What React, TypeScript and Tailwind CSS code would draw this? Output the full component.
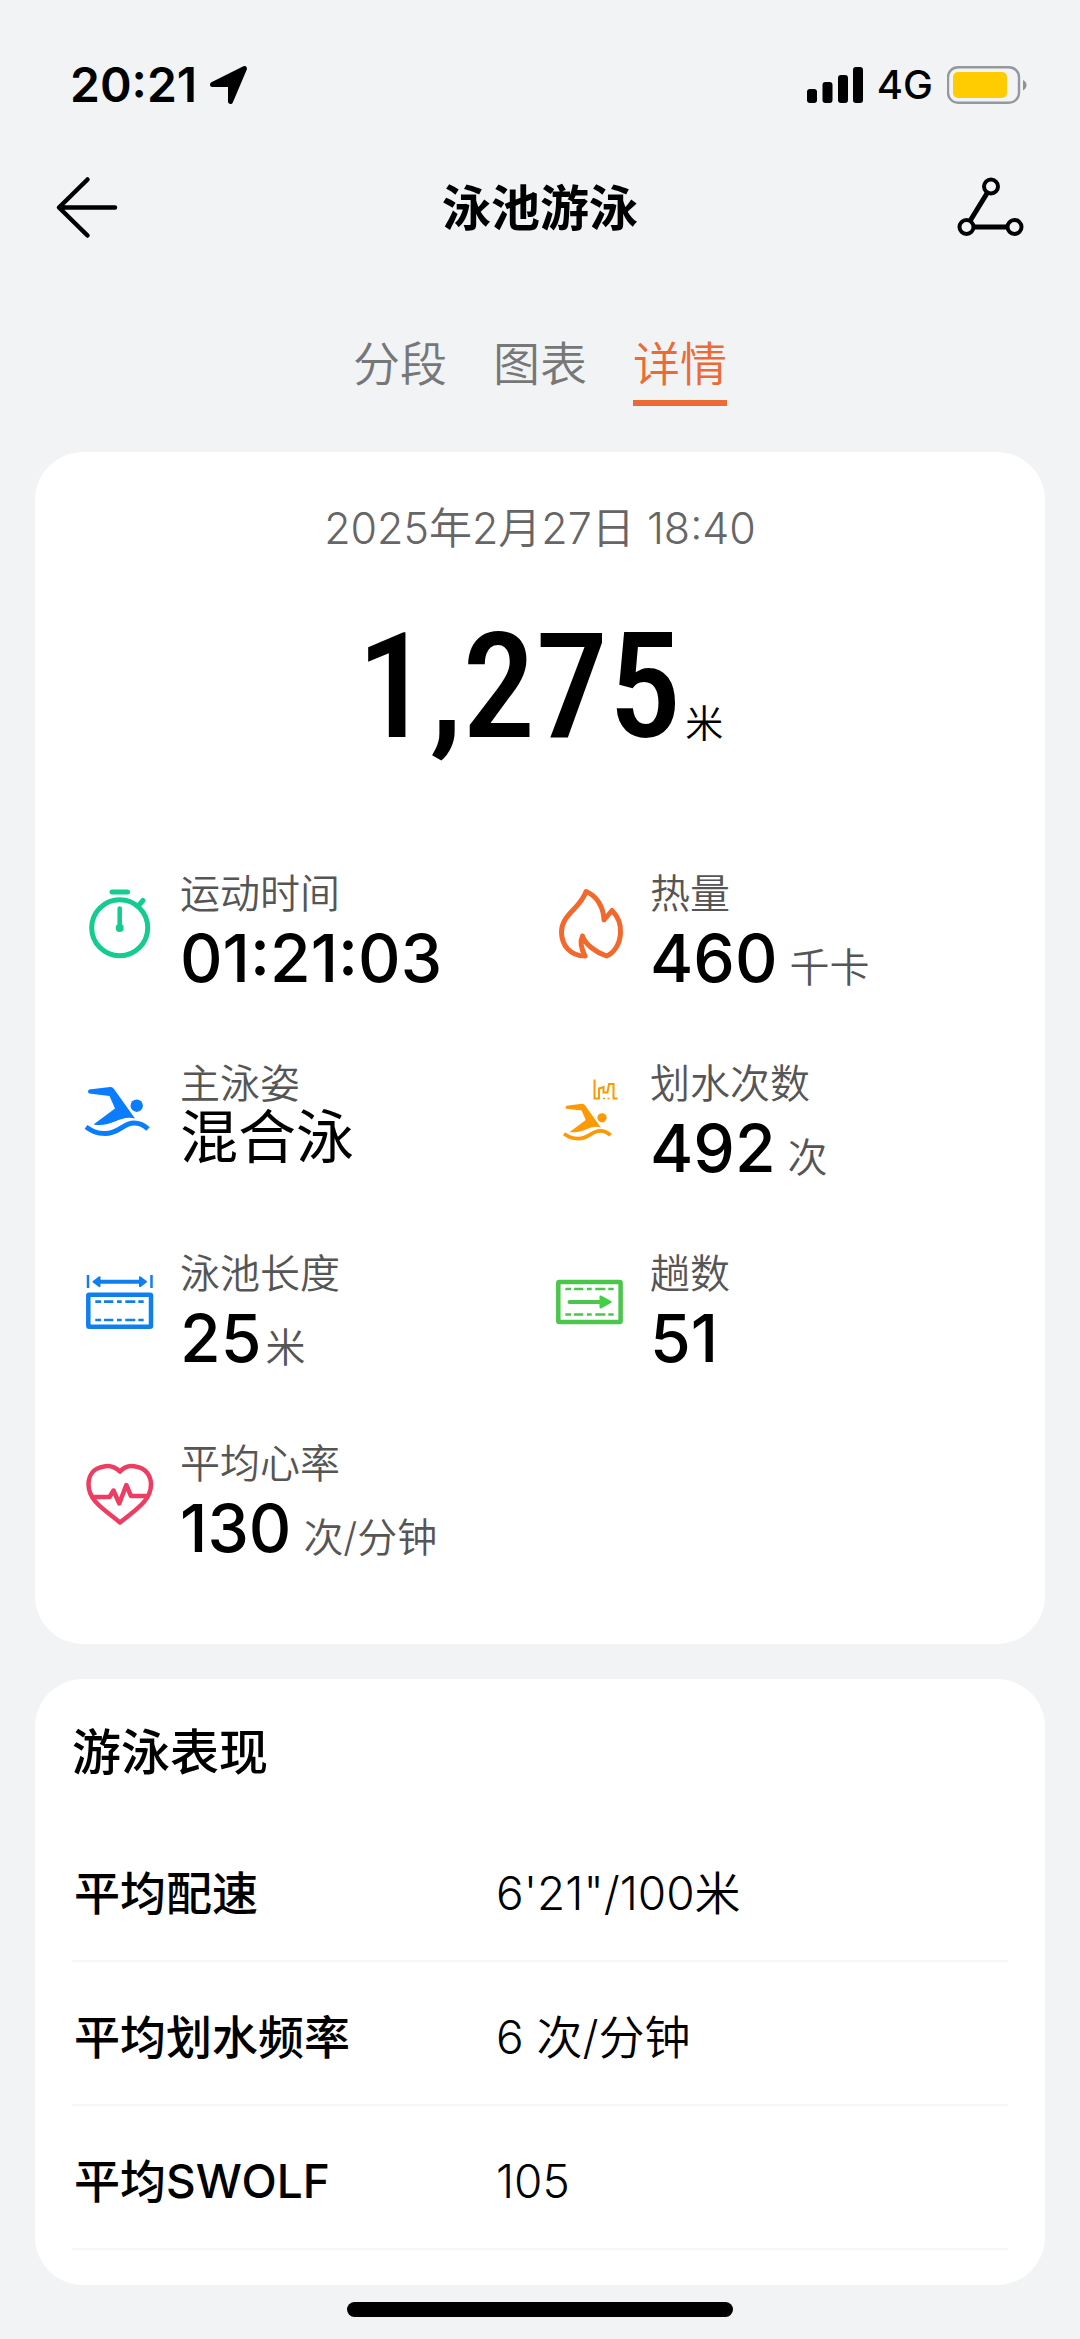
import type { ReactNode } from "react";

interface Metric {
  label: string;
  value: string;
  unit?: string;
  tightUnit?: boolean;
  icon: ReactNode;
}

const iconClass = "mt-[18px] h-[72px] w-[72px] shrink-0";

function StopwatchIcon() {
  return (
    <svg className={iconClass} viewBox="0 0 72 72" fill="none" stroke="#15cb8f" strokeWidth="5" strokeLinecap="round">
      <circle cx="35.7" cy="39.7" r="28" />
      <path d="M28 4h15.500M55 17l4-4.500" />
      <path d="M35.700 20.500v18" strokeWidth="4.500" />
      <circle cx="35.7" cy="40" r="4" fill="#15cb8f" stroke="none" />
    </svg>
  );
}

function FlameIcon() {
  return (
    <svg className={iconClass} viewBox="0 0 72 72" fill="none" stroke="#f2692e" strokeWidth="5" strokeLinejoin="round">
      <path d="M32 3.500C43 8 49.500 19 50 32l8-9.500c6 6 9 14 8.500 22.500C66 56 60 65 52.500 68 41 64 31 56 28.500 48c-3 6-1 13 2.500 20C16 68 7.500 57 7.500 44 7.500 26 27 20 32 3.500Z" />
    </svg>
  );
}

function Swimmer() {
  return (
    <>
      <path d="M5 11.500 26 9q2.500-.3 4 2L51 40.500C36 36.500 27 50 9.500 46.500L31 30.500 25.500 18 5 15.500q-2-2 0-4Z" />
      <circle cx="52.7" cy="27.7" r="6.200" />
      <path d="M2 49c6 4 10 6.500 19 6.500C35 55.500 39 45 50 45c6 0 10 2 14 6" fill="none" stroke="currentColor" strokeWidth="5" />
    </>
  );
}

function StrokeStyleIcon() {
  return (
    <svg className="mt-[18px] h-[72px] w-[72px] shrink-0 text-[#0a7dff]" viewBox="0 0 72 72" fill="currentColor">
      <Swimmer />
    </svg>
  );
}

function StrokeCountIcon() {
  return (
    <svg className="mt-[18px] h-[72px] w-[72px] shrink-0 text-[#fb9a05]" viewBox="0 0 72 72" fill="currentColor">
      <g transform="translate(8.500 19) scale(.75)">
        <Swimmer />
      </g>
      <path d="M40.500 1.500v19h4.500V10.500l4.500-1.500v5.500h4l1.500-8.500h4.500v14.500h4" fill="none" stroke="currentColor" strokeWidth="2" />
      <path d="M49 20.500h2M53.500 20.500h2" stroke="currentColor" strokeWidth="1.500" />
    </svg>
  );
}

function PoolLengthIcon() {
  return (
    <svg className={iconClass} viewBox="0 0 72 72" fill="none" stroke="#0f7ff0">
      <path d="M4 7v13M67.500 7v13" strokeWidth="2.500" />
      <path d="M14 13.700h44" strokeWidth="4" />
      <path d="m9.500 13.700 6-4.500v9zM62 13.700l-6-4.500v9z" fill="#0f7ff0" strokeWidth="2" strokeLinejoin="round" />
      <rect x="4.300" y="26.700" width="62.700" height="32" rx="1" strokeWidth="4.500" />
      <path d="M11.300 33.700H17M20 33.700h9.300M33 33.700h4.700M41.300 33.700h10M54.300 33.700h5.400M11.300 52H17M20 52h9.300M33 52h4.700M41.300 52h10M54.300 52h5.400" strokeWidth="2.700" />
    </svg>
  );
}

function LapsIcon() {
  return (
    <svg className={iconClass} viewBox="0 0 72 72" fill="none" stroke="#4ac64b">
      <rect x="4.300" y="14" width="62.300" height="40" rx="1" strokeWidth="4.500" />
      <path d="M11.300 21H17M20 21h9.300M33 21h4.700M41.300 21h10M54.300 21h5.400M11.300 46.500H17M20 46.500h9.300M33 46.500h4.700M41.300 46.500h10M54.300 46.500h5.400" strokeWidth="2.700" />
      <path d="M15.500 34h31" strokeWidth="4" strokeLinecap="round" />
      <path d="m46.500 28.500 10 5.500-10 5.500z" fill="#42cf45" stroke="#42cf45" strokeWidth="2" strokeLinejoin="round" />
    </svg>
  );
}

function HeartRateIcon() {
  return (
    <svg className={iconClass} viewBox="0 0 72 72" fill="none" stroke="#ee3d62" strokeWidth="4.500" strokeLinejoin="round">
      <path d="M36 13.500C30 8 24 7.500 20 8.500 9 10 4.500 18 4.500 26.500 4.500 43 21 52 36 64.500 51 52 67 43 67 26.500 67 18 62 10 51.500 8.500 47 7.500 41 8 36 13.500Z" />
      <path d="M8.500 39h17l4-6.500 5.800 13 7-18.500 4.700 11h16" />
    </svg>
  );
}

const metrics: Metric[] = [
  { label: "运动时间", value: "01:21:03", icon: <StopwatchIcon /> },
  { label: "热量", value: "460", unit: "千卡", icon: <FlameIcon /> },
  { label: "主泳姿", value: "混合泳", icon: <StrokeStyleIcon /> },
  { label: "划水次数", value: "492", unit: "次", icon: <StrokeCountIcon /> },
  { label: "泳池长度", value: "25", unit: "米", tightUnit: true, icon: <PoolLengthIcon /> },
  { label: "趟数", value: "51", icon: <LapsIcon /> },
  { label: "平均心率", value: "130", unit: "次/分钟", icon: <HeartRateIcon /> },
];

const performance = [
  { label: "平均配速", value: "6'21\"/100米" },
  { label: "平均划水频率", value: "6 次/分钟" },
  { label: "平均SWOLF", value: "105" },
];

const tabs = ["分段", "图表", "详情"];

function StatusBar() {
  return (
    <div className="flex h-[168px] items-center justify-between pt-[2px] pr-[53px] pl-[70px]">
      <div className="flex items-center gap-3">
        <span className="text-[48px] leading-none font-semibold">20:21</span>
        <svg className="h-10 w-10" viewBox="0 0 40 40">
          <path d="M35.500 3.500 21.500 36.500V19.500H3.500Z" stroke="#000" strokeWidth="5" strokeLinejoin="round" />
        </svg>
      </div>
      <div className="flex items-center gap-[14px]">
        <svg className="h-9 w-14" viewBox="0 0 56 36">
          <rect x="0" y="22" width="10" height="14" rx="3" />
          <rect x="15.500" y="15" width="10" height="21" rx="3" />
          <rect x="31" y="8" width="10" height="28" rx="3" />
          <rect x="46" y="0" width="10" height="36" rx="3" />
        </svg>
        <span className="text-[40px] leading-none font-medium">4G</span>
        <svg className="h-[38px] w-20" viewBox="0 0 80 38">
          <rect x="1" y="1.200" width="71" height="35.500" rx="10" fill="none" stroke="#95989c" strokeWidth="2.400" />
          <rect x="6" y="6" width="54" height="26" rx="5" fill="#ffcc02" />
          <path d="M76 14q3.500 2 3.500 5T76 24.500Z" fill="#8f9194" />
        </svg>
      </div>
    </div>
  );
}

function Header() {
  return (
    <header className="flex h-20 items-center justify-between px-[54px]">
      <button type="button" aria-label="返回">
        <svg className="h-[66px] w-[70px]" viewBox="0 0 70 66" fill="none" stroke="#000" strokeWidth="4.500" strokeLinecap="round" strokeLinejoin="round">
          <path d="M61 32.500H5M33.500 4.500 5 32.500l28.500 28" />
        </svg>
      </button>
      <h1 className="text-[49px] leading-none font-bold">泳池游泳</h1>
      <button type="button" aria-label="分享">
        <svg className="h-[66px] w-[70px]" viewBox="0 0 70 66" fill="none" stroke="#000" strokeWidth="4">
          <circle cx="35" cy="11.500" r="7" />
          <circle cx="10.500" cy="52" r="7" />
          <circle cx="58.500" cy="52" r="7" />
          <path d="M31.500 17.500 14 46M17.500 52h34" strokeWidth="5" />
        </svg>
      </button>
    </header>
  );
}

function MetricItem({ metric }: { metric: Metric }) {
  const isText = metric.value === "混合泳";
  return (
    <div className="flex gap-6">
      {metric.icon}
      <div>
        <div className="text-[40px] leading-[48px] font-[350] text-[#555]">{metric.label}</div>
        {isText ? (
          <div className="text-[58px] leading-[58px]">{metric.value}</div>
        ) : (
          <div className={`mt-1 flex h-[72px] items-baseline whitespace-nowrap ${metric.tightUnit ? "gap-1" : "gap-3"}`}>
            <span className="text-[66px] leading-[72px] font-medium">{metric.value}</span>
            {metric.unit && <span className="text-[40px] leading-[40px] font-[350] text-[#555]">{metric.unit}</span>}
          </div>
        )}
      </div>
    </div>
  );
}

export default function App() {
  return (
    <div className="min-h-screen bg-[#f1f3f5] font-['Inter','Noto_Sans_CJK_SC',sans-serif] text-black">
      <StatusBar />
      <Header />

      <nav className="mt-20 flex h-[78px] justify-center gap-[46px]">
        {tabs.map((tab) => (
          <button
            key={tab}
            type="button"
            className={`h-full border-b-[6px] text-[47px] leading-[64px] font-[350] ${
              tab === "详情" ? "border-[#ec6a33] text-[#ec6a33]" : "border-transparent text-[#777]"
            }`}
          >
            {tab}
          </button>
        ))}
      </nav>

      <main className="mt-[46px] px-[35px]">
        <section className="rounded-[48px] bg-white pt-12 pb-20">
          <p className="text-center text-[43px] leading-[56px] font-[350] text-[#666]">2025年2月27日 18:40</p>
          <div className="mt-[42px] flex h-[180px] items-baseline justify-center gap-1">
            <span className="font-['Roboto_Condensed','Roboto',sans-serif] text-[146px] leading-[180px] font-medium">
              1,275
            </span>
            <span className="text-[38px] font-[350]">米</span>
          </div>
          <div className="mt-[92px] grid grid-cols-2 gap-y-[66px] pr-[21px] pl-[49px]">
            {metrics.map((metric) => (
              <MetricItem key={metric.label} metric={metric} />
            ))}
          </div>
        </section>

        <section className="mt-[35px] rounded-[48px] bg-white px-[37px] pt-[42px] pb-[35px]">
          <h2 className="text-[49px] leading-[64px] font-medium">游泳表现</h2>
          <table className="mt-8 w-full text-left text-[46px] leading-[64px]">
            <tbody>
              {performance.map((row) => (
                <tr key={row.label} className="h-36 border-b-2 border-[#f6f6f6]">
                  <th className="w-[424px] pt-2 pl-[2px] font-medium">{row.label}</th>
                  <td className="pt-2 font-[350]">{row.value}</td>
                </tr>
              ))}
            </tbody>
          </table>
        </section>
      </main>

      <div className="mx-auto mt-[17px] h-[15px] w-[386px] rounded-full bg-black" />
    </div>
  );
}
